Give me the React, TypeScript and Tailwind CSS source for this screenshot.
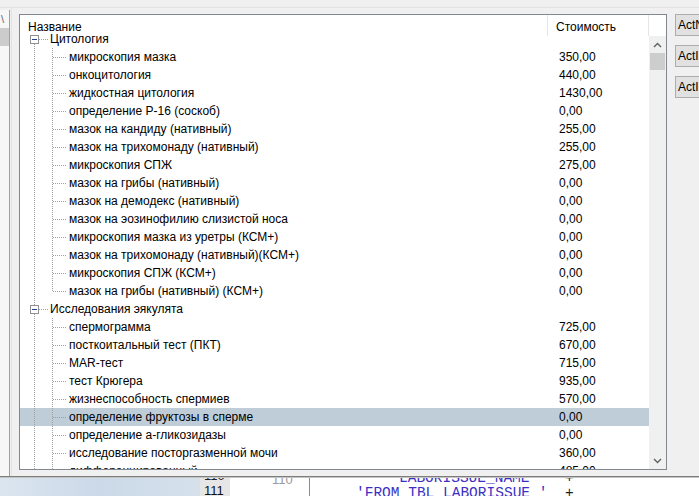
import React from 'react';

type Row = { name: string; price?: string; root?: boolean; last?: boolean; prevRoot?: boolean; selected?: boolean };

const rows: Row[] = [
  { name: 'Цитология', root: true },
  { name: 'микроскопия мазка', price: '350,00' },
  { name: 'онкоцитология', price: '440,00' },
  { name: 'жидкостная цитология', price: '1430,00' },
  { name: 'определение Р-16 (соскоб)', price: '0,00' },
  { name: 'мазок на кандиду (нативный)', price: '255,00' },
  { name: 'мазок на трихомонаду (нативный)', price: '255,00' },
  { name: 'микроскопия СПЖ', price: '275,00' },
  { name: 'мазок на грибы (нативный)', price: '0,00' },
  { name: 'мазок на демодекс (нативный)', price: '0,00' },
  { name: 'мазок на эозинофилию слизистой носа', price: '0,00' },
  { name: 'микроскопия мазка из уретры (КСМ+)', price: '0,00' },
  { name: 'мазок на трихомонаду (нативный)(КСМ+)', price: '0,00' },
  { name: 'микроскопия СПЖ (КСМ+)', price: '0,00' },
  { name: 'мазок на грибы (нативный) (КСМ+)', price: '0,00', last: true },
  { name: 'Исследования эякулята', root: true, prevRoot: true },
  { name: 'спермограмма', price: '725,00' },
  { name: 'посткоитальный тест (ПКТ)', price: '670,00' },
  { name: 'MAR-тест', price: '715,00' },
  { name: 'тест Крюгера', price: '935,00' },
  { name: 'жизнеспособность спермиев', price: '570,00' },
  { name: 'определение фруктозы в сперме', price: '0,00', selected: true },
  { name: 'определение а-гликозидазы', price: '0,00' },
  { name: 'исследование посторгазменной мочи', price: '360,00' },
  { name: 'дифференцированный', price: '485,00' },
];

const dot = { stroke: '#a0a0a0', strokeWidth: 1, strokeDasharray: '1 1', shapeRendering: 'crispEdges' as const };

// connectors for one tree row, 18px tall
const TreeLines = ({ row }: { row: Row }) => {
  if (row.root) {
    return (
      <svg width="29" height="18" className="shrink-0">
        {row.prevRoot && <line x1="14.5" y1="0" x2="14.5" y2="5" {...dot} />}
        <line x1="14.5" y1="14" x2="14.5" y2="18" {...dot} />
        <line x1="19" y1="9.5" x2="28" y2="9.5" {...dot} />
        <rect x="10.5" y="5.5" width="8" height="8" fill="#fff" stroke="#919191" shapeRendering="crispEdges" />
        <line x1="12" y1="9.5" x2="17" y2="9.5" stroke="#24408e" strokeWidth="1" shapeRendering="crispEdges" />
      </svg>
    );
  }
  return (
    <svg width="48" height="18" className="shrink-0">
      <line x1="14.5" y1="0" x2="14.5" y2="18" {...dot} />
      <line x1="32.5" y1="0" x2="32.5" y2={row.last ? 10 : 18} {...dot} />
      <line x1="33" y1="9.5" x2="47" y2="9.5" {...dot} />
    </svg>
  );
};

const Chevron = ({ up }: { up?: boolean }) => (
  <svg width="9" height="6" viewBox="0 0 9 6">
    <path d={up ? 'M1 5 L4.5 1.5 L8 5' : 'M1 1 L4.5 4.5 L8 1'} fill="none" stroke="#606060" strokeWidth="1.4" />
  </svg>
);

export default function App() {
  return (
    <div
      className="w-[699px] h-[496px] overflow-hidden bg-[#f0f0f0] flex flex-col text-black"
      style={{ fontFamily: '"Liberation Sans", Arial, sans-serif' }}
    >
      <div className="h-[8px] shrink-0 border-b border-[#e2e2e2]" />

      <div className="flex flex-1 min-h-0">
        {/* left side panel, cut off */}
        <div className="w-[10px] shrink-0 flex flex-col border-r border-[#a0a0a0] bg-[#f7f7f7] mt-[2px]">
          <div className="h-[18px] text-[11px] leading-[18px] text-[#666] pl-[1px]">\</div>
          <div className="h-[18px] bg-[#cccccc]" />
        </div>
        <div className="w-[2px] shrink-0 border-r border-[#e3e3e3]" />

        <div className="w-[7px] shrink-0" />

        {/* list */}
        <div className="w-[648px] shrink-0 mt-[6px] mb-[6px] border border-[#828790] bg-white flex flex-col text-[12px]">
          <div className="h-[21px] shrink-0 flex">
            <div className="w-[528px] border-r border-[#e5e5e5] pl-[8px] pt-[5px] leading-[15px]">Название</div>
            <div className="w-[101px] border-r border-[#e5e5e5] pl-[8px] pt-[5px] leading-[15px]">Стоимость</div>
            <div className="flex-1" />
          </div>
          <div className="flex flex-1 min-h-0">
            <div className="w-[629px] -mt-[6px] overflow-hidden relative">
              {rows.map((r, i) => (
                <div key={i} className={`h-[18px] flex items-center ${r.selected ? 'bg-[#bfcdd9]' : ''}`}>
                  <div className="w-[528px] flex items-center">
                    <TreeLines row={r} />
                    <span className="pl-[1px] leading-[18px] whitespace-nowrap">{r.name}</span>
                  </div>
                  <div className="w-[101px] pl-[11px] leading-[18px]">{r.price}</div>
                </div>
              ))}
            </div>
            <div className="w-[17px] shrink-0 bg-[#f0f0f0] flex flex-col items-center">
              <div className="h-[17px] flex items-center justify-center">
                <Chevron up />
              </div>
              <div className="w-[15px] h-[17px] bg-[#cdcdcd]" />
              <div className="flex-1" />
              <div className="h-[17px] flex items-center justify-center">
                <Chevron />
              </div>
            </div>
          </div>
        </div>

        <div className="w-[8px] shrink-0" />

        {/* buttons */}
        <div className="flex flex-col gap-[9px] pt-[6px] shrink-0">
          {['ActNew', 'ActInsert', 'ActInfo'].map((b) => (
            <div
              key={b}
              className="w-[80px] h-[22px] border border-[#adadad] bg-[#e1e1e1] text-[12px] leading-[20px] pl-[2px] whitespace-nowrap"
            >
              {b}
            </div>
          ))}
        </div>
      </div>

      <div className="h-[1px] shrink-0 bg-[#7d7d7d]" />
      <div className="h-[1px] shrink-0 bg-[#c4c4c4]" />

      {/* code editor behind the dialog */}
      <div className="h-[18px] shrink-0 flex overflow-hidden bg-white" style={{ fontFamily: '"Liberation Mono", "Courier New", monospace' }}>
        <div className="w-[200px] shrink-0 bg-gradient-to-r from-[#dbe5ef] via-[#cbd9e8] to-[#d6e1ec]" />
        <div className="w-[30px] shrink-0 bg-[#e6e6e6] flex flex-col text-[13px] leading-[15px] -mt-[10px] pl-[4px]" style={{ fontFamily: '"Liberation Sans", Arial, sans-serif' }}>
          <span className="text-[#222]">110</span>
          <span className="text-[#111]">111</span>
        </div>
        <div className="w-[80px] shrink-0 border-r border-[#6f8fc8] flex flex-col text-[13px] leading-[15px] -mt-[6px] pl-[42px]" style={{ fontFamily: '"Liberation Sans", Arial, sans-serif' }}>
          <span className="text-[#9a9a9a]">110</span>
        </div>
        <div className="flex-1 flex flex-col text-[14.5px] leading-[15px] -mt-[7px] text-[#3b2fc4] whitespace-pre">
          <div className="flex">
            <span className="pl-[89px] w-[255px]">LABORISSUE_NAME</span>
            <span className="text-[#222]">+</span>
          </div>
          <div className="flex">
            <span className="pl-[46px] w-[255px]">'FROM TBL_LABORISSUE '</span>
            <span className="text-[#222]">+</span>
          </div>
        </div>
      </div>
    </div>
  );
}
